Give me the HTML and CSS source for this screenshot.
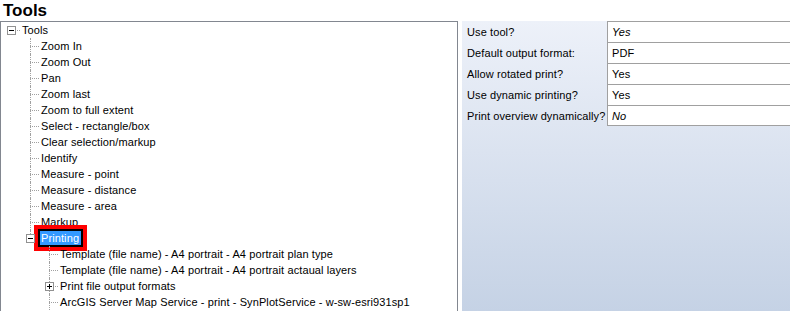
FILE: index.html
```html
<html>
  <head>
    <meta charset="UTF-8" />
    <title>Tools</title>
    <link rel="stylesheet" href="styles.css">
  </head>
  <body>
    <h1 class="title">Tools</h1>
    <div class="main">
      <div class="tree">
        <ul class="root">
          <li class="node">
            <div class="row">
              <svg class="toggle" width="9" height="9"><rect x="0.5" y="0.5" width="8" height="8" fill="#fff" stroke="#919191"/><path d="M2 4.5h5" stroke="#000"/></svg>
              <span class="label">Tools</span>
            </div>
            <ul>
              <li><div class="row"><span class="label">Zoom In</span></div></li>
              <li><div class="row"><span class="label">Zoom Out</span></div></li>
              <li><div class="row"><span class="label">Pan</span></div></li>
              <li><div class="row"><span class="label">Zoom last</span></div></li>
              <li><div class="row"><span class="label">Zoom to full extent</span></div></li>
              <li><div class="row"><span class="label">Select - rectangle/box</span></div></li>
              <li><div class="row"><span class="label">Clear selection/markup</span></div></li>
              <li><div class="row"><span class="label">Identify</span></div></li>
              <li><div class="row"><span class="label">Measure - point</span></div></li>
              <li><div class="row"><span class="label">Measure - distance</span></div></li>
              <li><div class="row"><span class="label">Measure - area</span></div></li>
              <li><div class="row"><span class="label">Markup</span></div></li>
              <li class="node">
                <div class="row">
                  <svg class="toggle" width="9" height="9"><rect x="0.5" y="0.5" width="8" height="8" fill="#fff" stroke="#919191"/><path d="M2 4.5h5" stroke="#000"/></svg>
                  <span class="label selected">Printing</span>
                </div>
                <ul>
                  <li><div class="row"><span class="label">Template (file name) - A4 portrait - A4 portrait plan type</span></div></li>
                  <li><div class="row"><span class="label">Template (file name) - A4 portrait - A4 portrait actaual layers</span></div></li>
                  <li class="node">
                    <div class="row">
                      <svg class="toggle" width="9" height="9"><rect x="0.5" y="0.5" width="8" height="8" fill="#fff" stroke="#919191"/><path d="M2 4.5h5M4.5 2v5" stroke="#000"/></svg>
                      <span class="label">Print file output formats</span>
                    </div>
                  </li>
                  <li class="more"><div class="row"><span class="label">ArcGIS Server Map Service - print - SynPlotService - w-sw-esri931sp1</span></div></li>
                </ul>
              </li>
            </ul>
          </li>
        </ul>
      </div>
      <div class="props">
        <div class="prop">
          <div class="prop-name">Use tool?</div>
          <div class="prop-value default">Yes</div>
        </div>
        <div class="prop">
          <div class="prop-name">Default output format:</div>
          <div class="prop-value">PDF</div>
        </div>
        <div class="prop">
          <div class="prop-name">Allow rotated print?</div>
          <div class="prop-value">Yes</div>
        </div>
        <div class="prop">
          <div class="prop-name">Use dynamic printing?</div>
          <div class="prop-value">Yes</div>
        </div>
        <div class="prop last">
          <div class="prop-name">Print overview dynamically?</div>
          <div class="prop-value default">No</div>
        </div>
      </div>
    </div>
  </body>
</html>
```
FILE: styles.css
```css
html,
body {
  margin: 0;
  height: 100%;
  overflow: hidden;
  background: white;
}
body {
  font-family: "Liberation Sans", Arial, sans-serif;
  font-size: 11px;
  letter-spacing: 0.1px;
  color: black;
  display: flex;
  flex-direction: column;
}
.title {
  margin: 0;
  padding-left: 3px;
  font-size: 17px;
  line-height: 21px;
  font-weight: bold;
  letter-spacing: 0;
}
.main {
  flex: 1;
  display: flex;
  gap: 4px;
  min-height: 0;
}

/* tree view */
.tree {
  width: 458px;
  box-sizing: border-box;
  border: 1px solid #828790;
  border-bottom: none;
  overflow: hidden;
}
.tree ul {
  list-style: none;
  margin: 0;
  padding: 0 0 0 19px;
}
.tree ul.root {
  padding: 0;
}
.tree li {
  position: relative;
}
.tree ul ul > li::before {
  content: "";
  position: absolute;
  left: 10px;
  top: 0;
  bottom: 0;
  border-left: 1px dotted #a0a0a0;
}
.tree ul ul > li:last-child::before {
  bottom: auto;
  height: 8px;
}
/* list goes on below the visible area */
.tree ul ul > li.more::before {
  height: auto;
  bottom: -8px;
}
.row {
  position: relative;
  height: 16px;
  line-height: 16px;
  padding-left: 20px;
  white-space: nowrap;
}
.row::before {
  content: "";
  position: absolute;
  left: 10px;
  top: 8px;
  width: 9px;
  border-top: 1px dotted #a0a0a0;
}
.toggle {
  position: absolute;
  left: 6px;
  top: 4px;
  z-index: 1;
}
.label {
  display: inline-block;
  padding: 0 1px;
  line-height: 14px;
  vertical-align: top;
  margin-top: 1px;
}
.label.selected {
  position: relative;
  padding: 0 2px 0 1px;
  background: #3399ff;
  color: white;
  outline: 2px solid black;
  box-shadow: 0 0 0 6px #ff0000;
}

/* property grid */
.props {
  flex: 1;
  background: linear-gradient(#edf1f9, #c5d2e5);
}
.prop {
  display: flex;
  height: 21px;
}
.prop-name {
  width: 145px;
  box-sizing: border-box;
  padding: 1px 0 0 5px;
  line-height: 20px;
  white-space: nowrap;
  overflow: hidden;
}
.prop-value {
  flex: 1;
  background: white;
  border-top: 1px solid #a0a0a0;
  border-left: 1px solid #a0a0a0;
  padding-left: 4px;
  line-height: 20px;
}
.prop.last .prop-value {
  border-bottom: 1px solid #a0a0a0;
}
.default {
  font-style: italic;
}
```
